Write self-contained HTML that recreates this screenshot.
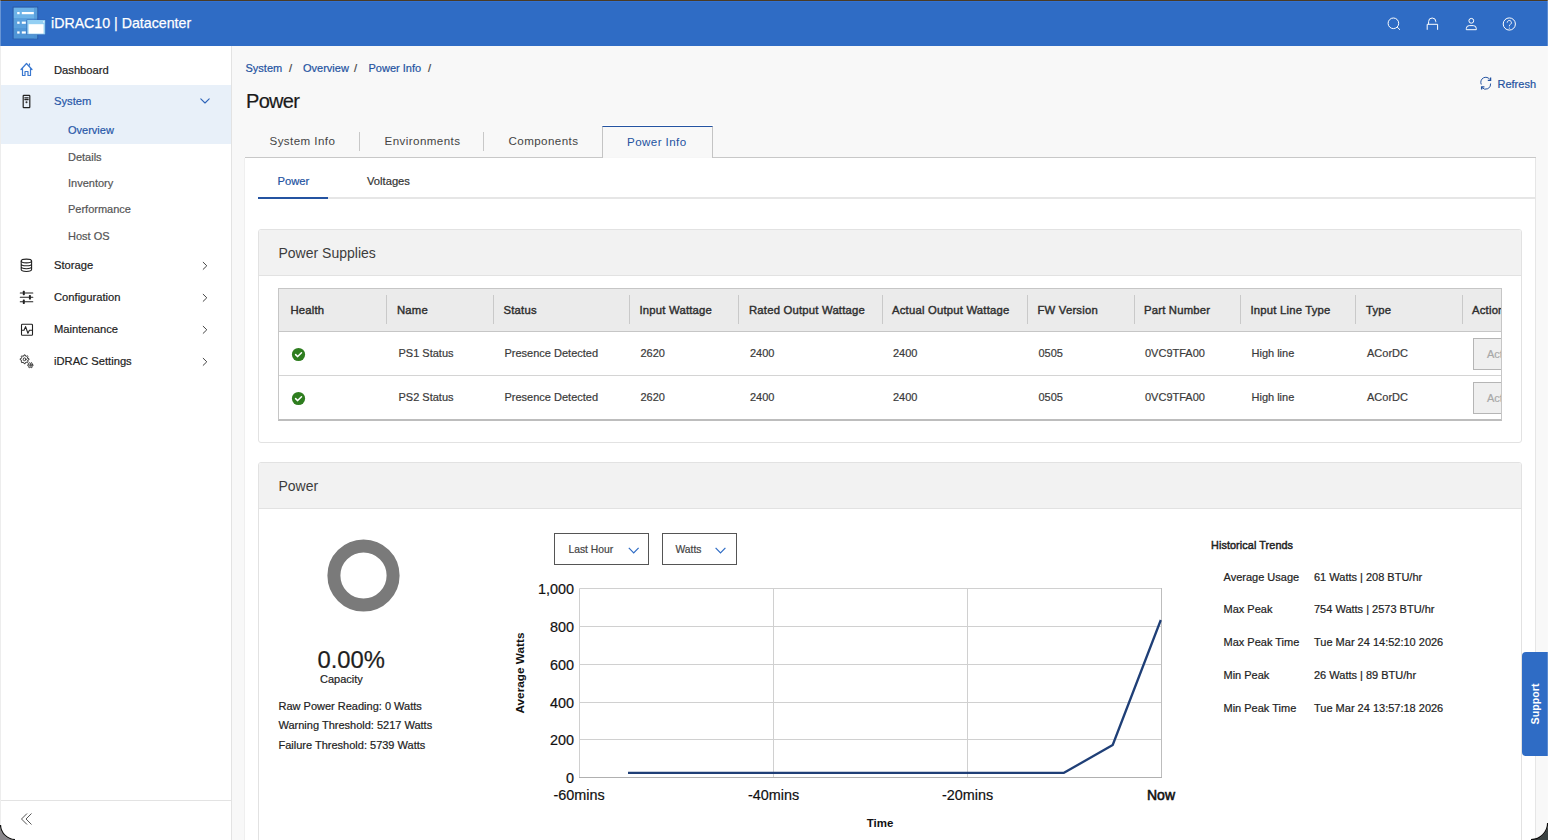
<!DOCTYPE html><html><head><meta charset="utf-8"><style>
html,body{margin:0;padding:0;width:1548px;height:840px;overflow:hidden;background:#f8f8f8}
body{position:relative;font-family:"Liberation Sans", sans-serif}
.t{position:absolute;line-height:1;white-space:nowrap;-webkit-text-stroke:0.2px currentColor}
.r{position:absolute;box-sizing:border-box}
svg.r{overflow:visible}
</style></head><body>
<div class="r" style="left:0px;top:0px;width:1548px;height:840px;background:#f8f8f8"></div>
<div class="r" style="left:0px;top:46px;width:231px;height:794px;background:#fff"></div>
<div class="r" style="left:231px;top:46px;width:1px;height:794px;background:#e3e3e3"></div>
<div class="r" style="left:0px;top:46px;width:1px;height:794px;background:#e6e6e6"></div>
<div class="r" style="left:0px;top:0px;width:1548px;height:46px;background:#2f6cc5"></div>
<div class="r" style="left:0px;top:0px;width:1548px;height:1px;background:#4a3b25"></div>
<div class="r" style="left:0px;top:1px;width:1548px;height:1px;background:#3371d2"></div>
<svg class="r" style="left:12px;top:6px" width="36" height="34" viewBox="0 0 36 34">
<rect x="0.6" y="0.6" width="25.6" height="32.6" fill="#2858a6"/>
<rect x="1.6" y="1.6" width="23.6" height="10.4" fill="#6db3e8"/>
<rect x="1.6" y="12" width="23.6" height="10" fill="#5aa0dd"/>
<rect x="1.6" y="22" width="23.6" height="10.6" fill="#4f95d6"/>
<rect x="22" y="1.6" width="3.2" height="31" fill="#4a8fd2" opacity="0.55"/>
<rect x="5.2" y="6" width="2.4" height="2.2" fill="#fff"/>
<rect x="9.8" y="6" width="12" height="2.2" fill="#fff"/>
<rect x="5.2" y="15.6" width="2.4" height="2.2" fill="#fff"/>
<rect x="9.8" y="15.6" width="4" height="2.2" fill="#fff"/>
<rect x="5.2" y="25.4" width="2.4" height="2.2" fill="#fff"/>
<rect x="9.8" y="25.4" width="4" height="2.2" fill="#fff"/>
<rect x="14.6" y="13.6" width="19" height="15.2" fill="#2d62b3"/>
<rect x="15.2" y="14" width="18" height="14.4" fill="#93cff3"/>
<rect x="16.6" y="18.2" width="15" height="9.4" fill="#fff"/>
<rect x="31" y="15.2" width="1.4" height="1.4" fill="#fff" opacity="0.7"/>
</svg>
<div class="t" style="left:51px;top:15.98px;font-size:14.2px;color:#fff;font-weight:500;-webkit-text-stroke:0.25px #fff;">iDRAC10 | Datacenter</div>
<svg class="r" style="left:1384px;top:14px" width="140" height="20" viewBox="0 0 140 20" fill="none" stroke="#fff" stroke-width="1">
<circle cx="9.4" cy="9.3" r="5.3"/><path d="M13.1 13 L16 15.8"/>
<path d="M44.6 10.3 V7.6 A3.6 3.6 0 0 1 51.8 7.6 V8.2"/><path d="M43.2 15.8 V10.3 H53.6 V15.8"/>
<circle cx="87.3" cy="6.8" r="2.4"/><path d="M82.3 15.7 V14.6 A3 3 0 0 1 85.3 11.6 H89.3 A3 3 0 0 1 92.3 14.6 V15.7 Z"/>
<circle cx="125.3" cy="10" r="6.1"/><path d="M123.2 8.6 A2.1 2.1 0 1 1 126.4 10.4 C125.6 10.9 125.3 11.3 125.3 12.3"/><circle cx="125.3" cy="14.1" r="0.55" fill="#fff" stroke="none"/>
</svg>
<div class="r" style="left:1px;top:85px;width:230px;height:59px;background:#e8f0f9"></div>
<svg class="r" style="left:0;top:46px" width="231" height="360" viewBox="0 46 231 360" fill="none" stroke-linejoin="round" stroke-linecap="round">
<g stroke="#3a78d0" stroke-width="1.2"><path d="M21 69.5 L26.5 63.5 L32 69.5 M22.5 68 V75.5 H25 V71.5 H28 V75.5 H30.5 V68 M29.5 65 V63.8"/></g>
<g stroke="#222" stroke-width="1.2"><rect x="23.2" y="95.3" width="6.6" height="12.4" rx="0.6"/><path d="M24.8 97.8 H28.2 M24.8 99.6 H28.2"/><circle cx="26.5" cy="102.3" r="0.4" fill="#222"/></g>
<g stroke="#222" stroke-width="1.1"><ellipse cx="26.4" cy="261" rx="5.2" ry="1.9"/><path d="M21.2 261 V269.6 A5.2 1.9 0 0 0 31.6 269.6 V261 M21.2 263.9 A5.2 1.9 0 0 0 31.6 263.9 M21.2 266.8 A5.2 1.9 0 0 0 31.6 266.8"/></g>
<g stroke="#222" stroke-width="1.1"><path d="M20.3 293 H32.8 M20.3 297.3 H32.8 M20.3 301.7 H32.8"/></g>
<g fill="#222"><rect x="22.8" y="290.8" width="2" height="4.4" rx="0.6"/><rect x="28.9" y="295.1" width="2" height="4.4" rx="0.6"/><rect x="22.8" y="299.5" width="2" height="4.4" rx="0.6"/></g>
<g stroke="#222" stroke-width="1.1"><rect x="21.5" y="324.3" width="11" height="11" rx="0.9"/><path d="M22.3 330.2 H24 L25.6 326.6 L27.9 333.2 L29.4 330.2 H31.8"/></g>
<g stroke="#222" stroke-width="0.9"><path d="M27.78 358.40 L28.96 358.70 L28.96 359.90 L27.78 360.20 L27.48 360.91 L28.11 361.96 L27.26 362.81 L26.21 362.18 L25.50 362.48 L25.20 363.66 L24.00 363.66 L23.70 362.48 L22.99 362.18 L21.94 362.81 L21.09 361.96 L21.72 360.91 L21.42 360.20 L20.24 359.90 L20.24 358.70 L21.42 358.40 L21.72 357.69 L21.09 356.64 L21.94 355.79 L22.99 356.42 L23.70 356.12 L24.00 354.94 L25.20 354.94 L25.50 356.12 L26.21 356.42 L27.26 355.79 L28.11 356.64 L27.48 357.69 Z"/><circle cx="24.6" cy="359.3" r="1.4"/>
<path d="M32.17 364.52 L33.05 364.71 L33.05 365.69 L32.17 365.88 L31.88 366.40 L32.15 367.25 L31.30 367.75 L30.70 367.08 L30.10 367.08 L29.50 367.75 L28.65 367.25 L28.92 366.40 L28.63 365.88 L27.75 365.69 L27.75 364.71 L28.63 364.52 L28.92 364.00 L28.65 363.15 L29.50 362.65 L30.10 363.32 L30.70 363.32 L31.30 362.65 L32.15 363.15 L31.88 364.00 Z"/><circle cx="30.4" cy="365.2" r="0.8"/></g>
<g stroke="#2d63b8" stroke-width="1.1"><path d="M200.8 98.8 L205 103 L209.2 98.8"/></g>
<g stroke="#444" stroke-width="1"><path d="M203.2 262.3 L206.8 265.8 L203.2 269.3 M203.2 294.3 L206.8 297.8 L203.2 301.3 M203.2 326.3 L206.8 329.8 L203.2 333.3 M203.2 358.3 L206.8 361.8 L203.2 365.3"/></g>
</svg>
<div class="t" style="left:54px;top:64.52px;font-size:11.2px;color:#222;font-weight:normal;">Dashboard</div>
<div class="t" style="left:54px;top:95.52px;font-size:11.2px;color:#2757a8;font-weight:normal;">System</div>
<div class="t" style="left:68px;top:124.69px;font-size:11px;color:#2757a8;font-weight:normal;">Overview</div>
<div class="t" style="left:68px;top:151.69px;font-size:11px;color:#555;font-weight:normal;">Details</div>
<div class="t" style="left:68px;top:177.69px;font-size:11px;color:#555;font-weight:normal;">Inventory</div>
<div class="t" style="left:68px;top:203.69px;font-size:11px;color:#555;font-weight:normal;">Performance</div>
<div class="t" style="left:68px;top:230.69px;font-size:11px;color:#555;font-weight:normal;">Host OS</div>
<div class="t" style="left:54px;top:259.52px;font-size:11.2px;color:#222;font-weight:normal;">Storage</div>
<div class="t" style="left:54px;top:291.52px;font-size:11.2px;color:#222;font-weight:normal;">Configuration</div>
<div class="t" style="left:54px;top:323.52px;font-size:11.2px;color:#222;font-weight:normal;">Maintenance</div>
<div class="t" style="left:54px;top:355.52px;font-size:11.2px;color:#222;font-weight:normal;">iDRAC Settings</div>
<div class="r" style="left:1px;top:800px;width:230px;height:1px;background:#e3e3e3"></div>
<svg class="r" style="left:18px;top:810px" width="18" height="18" viewBox="0 0 18 18" fill="none" stroke="#555" stroke-width="1">
<path d="M9 3.5 L3.5 9 L9 14.5 M13.5 3.5 L8 9 L13.5 14.5"/></svg>
<div class="t" style="left:245.5px;top:62.69px;font-size:11px;color:#2453a1;font-weight:normal;">System</div>
<div class="t" style="left:289px;top:62.69px;font-size:11px;color:#444;font-weight:normal;">/</div>
<div class="t" style="left:303px;top:62.69px;font-size:11px;color:#2453a1;font-weight:normal;">Overview</div>
<div class="t" style="left:354px;top:62.69px;font-size:11px;color:#444;font-weight:normal;">/</div>
<div class="t" style="left:368.5px;top:62.69px;font-size:11px;color:#2453a1;font-weight:normal;">Power Info</div>
<div class="t" style="left:428px;top:62.69px;font-size:11px;color:#444;font-weight:normal;">/</div>
<div class="t" style="left:246px;top:91.07px;font-size:20px;color:#1a1a1a;font-weight:normal;letter-spacing:-0.7px;">Power</div>
<svg class="r" style="left:1478px;top:75px" width="16" height="17" viewBox="0 0 16 17" fill="none" stroke="#2453a1" stroke-width="1">
<path d="M3.3 9.5 A5 5 0 0 1 12 4.6"/><path d="M12.6 8.5 A5 5 0 0 1 4 12.6"/><path d="M12.6 2.5 V5.3 H9.8" stroke-width="1.3"/><path d="M3.6 14.6 V11.8 H6.4" stroke-width="1.3"/></svg>
<div class="t" style="left:1497.5px;top:78.69px;font-size:11px;color:#2453a1;font-weight:normal;">Refresh</div>
<div class="r" style="left:245px;top:157px;width:1291px;height:1px;background:#c8c8c8"></div>
<div class="r" style="left:359px;top:132px;width:1px;height:19px;background:#c8c8c8"></div>
<div class="r" style="left:483px;top:132px;width:1px;height:19px;background:#c8c8c8"></div>
<div class="t" style="left:269.5px;top:135.18px;font-size:11.6px;color:#444;font-weight:normal;letter-spacing:0.42px;-webkit-text-stroke:0;">System Info</div>
<div class="t" style="left:384.5px;top:135.18px;font-size:11.6px;color:#444;font-weight:normal;letter-spacing:0.42px;-webkit-text-stroke:0;">Environments</div>
<div class="t" style="left:508.5px;top:135.18px;font-size:11.6px;color:#444;font-weight:normal;letter-spacing:0.42px;-webkit-text-stroke:0;">Components</div>
<div class="r" style="left:602px;top:125px;width:112px;height:1px;background:#fff"></div>
<div class="r" style="left:602px;top:126px;width:111px;height:32px;background:#f8f8f8;border:1px solid #c4c4c4;border-top:1px solid #2453a1;border-bottom:none"></div>
<div class="t" style="left:627px;top:136.18px;font-size:11.6px;color:#2453a1;font-weight:normal;letter-spacing:0.42px;-webkit-text-stroke:0;">Power Info</div>
<div class="r" style="left:244px;top:158px;width:1292px;height:700px;background:#fff;border-left:1px solid #efefef;border-right:1px solid #e6e6e6"></div>
<div class="r" style="left:603px;top:157px;width:109px;height:1px;background:#f6f6f6"></div>
<div class="t" style="left:277.5px;top:175.52px;font-size:11.2px;color:#2453a1;font-weight:normal;">Power</div>
<div class="t" style="left:367px;top:175.52px;font-size:11.2px;color:#333;font-weight:normal;">Voltages</div>
<div class="r" style="left:258px;top:197px;width:1277px;height:2px;background:#e6e6e6"></div>
<div class="r" style="left:258px;top:197px;width:70px;height:2px;background:#2453a1"></div>
<div class="r" style="left:258px;top:229px;width:1264px;height:214px;background:#fff;border:1px solid #e2e2e2;border-radius:3px"></div>
<div class="r" style="left:259px;top:230px;width:1262px;height:46px;background:#f2f2f2;border-bottom:1px solid #e2e2e2;border-radius:2px 2px 0 0"></div>
<div class="t" style="left:278.5px;top:246.15px;font-size:14px;color:#3c3c3c;font-weight:normal;-webkit-text-stroke:0;">Power Supplies</div>
<div class="r" style="left:278px;top:288px;width:1224px;height:133px;background:#fff;border:1px solid #c6c6c6;border-bottom:2px solid #bdbdbd"></div>
<div class="r" style="left:279px;top:289px;width:1222px;height:43px;background:#ebebeb;border-bottom:1px solid #c6c6c6"></div>
<div class="r" style="left:279px;top:375px;width:1222px;height:1px;background:#d4d4d4"></div>
<div class="r" style="left:386px;top:295px;width:1px;height:29px;background:#c9c9c9"></div>
<div class="r" style="left:493px;top:295px;width:1px;height:29px;background:#c9c9c9"></div>
<div class="r" style="left:629px;top:295px;width:1px;height:29px;background:#c9c9c9"></div>
<div class="r" style="left:738px;top:295px;width:1px;height:29px;background:#c9c9c9"></div>
<div class="r" style="left:882px;top:295px;width:1px;height:29px;background:#c9c9c9"></div>
<div class="r" style="left:1027px;top:295px;width:1px;height:29px;background:#c9c9c9"></div>
<div class="r" style="left:1134px;top:295px;width:1px;height:29px;background:#c9c9c9"></div>
<div class="r" style="left:1240px;top:295px;width:1px;height:29px;background:#c9c9c9"></div>
<div class="r" style="left:1355px;top:295px;width:1px;height:29px;background:#c9c9c9"></div>
<div class="r" style="left:1462px;top:295px;width:1px;height:29px;background:#c9c9c9"></div>
<div class="r" style="left:279px;top:289px;width:1222px;height:42px;overflow:hidden">
<div class="t" style="left:11.5px;top:15.52px;font-size:11.3px;color:#2e2e2e;font-weight:normal;-webkit-text-stroke:0.4px #2e2e2e;letter-spacing:0.2px">Health</div>
<div class="t" style="left:118px;top:15.52px;font-size:11.3px;color:#2e2e2e;font-weight:normal;-webkit-text-stroke:0.4px #2e2e2e;letter-spacing:0.2px">Name</div>
<div class="t" style="left:224.5px;top:15.52px;font-size:11.3px;color:#2e2e2e;font-weight:normal;-webkit-text-stroke:0.4px #2e2e2e;letter-spacing:0.2px">Status</div>
<div class="t" style="left:360.5px;top:15.52px;font-size:11.3px;color:#2e2e2e;font-weight:normal;-webkit-text-stroke:0.4px #2e2e2e;letter-spacing:0.2px">Input Wattage</div>
<div class="t" style="left:470px;top:15.52px;font-size:11.3px;color:#2e2e2e;font-weight:normal;-webkit-text-stroke:0.4px #2e2e2e;letter-spacing:0.2px">Rated Output Wattage</div>
<div class="t" style="left:613px;top:15.52px;font-size:11.3px;color:#2e2e2e;font-weight:normal;-webkit-text-stroke:0.4px #2e2e2e;letter-spacing:0.2px">Actual Output Wattage</div>
<div class="t" style="left:758.5px;top:15.52px;font-size:11.3px;color:#2e2e2e;font-weight:normal;-webkit-text-stroke:0.4px #2e2e2e;letter-spacing:0.2px">FW Version</div>
<div class="t" style="left:865px;top:15.52px;font-size:11.3px;color:#2e2e2e;font-weight:normal;-webkit-text-stroke:0.4px #2e2e2e;letter-spacing:0.2px">Part Number</div>
<div class="t" style="left:971.5px;top:15.52px;font-size:11.3px;color:#2e2e2e;font-weight:normal;-webkit-text-stroke:0.4px #2e2e2e;letter-spacing:0.2px">Input Line Type</div>
<div class="t" style="left:1087px;top:15.52px;font-size:11.3px;color:#2e2e2e;font-weight:normal;-webkit-text-stroke:0.4px #2e2e2e;letter-spacing:0.2px">Type</div>
<div class="t" style="left:1193px;top:15.52px;font-size:11.3px;color:#2e2e2e;font-weight:normal;-webkit-text-stroke:0.4px #2e2e2e;letter-spacing:0.2px">Action</div>
</div>
<svg class="r" style="left:291px;top:347.0px" width="15" height="15" viewBox="0 0 15 15"><circle cx="7.5" cy="7.5" r="6.6" fill="#2e7d1f"/><path d="M4.6 7.6 L6.7 9.6 L10.5 5.7" fill="none" stroke="#fff" stroke-width="1.5" stroke-linecap="round" stroke-linejoin="round"/></svg>
<div class="t" style="left:398.5px;top:347.69px;font-size:11px;color:#3a3a3a;font-weight:normal;">PS1 Status</div>
<div class="t" style="left:504.5px;top:347.69px;font-size:11px;color:#3a3a3a;font-weight:normal;">Presence Detected</div>
<div class="t" style="left:640.5px;top:347.69px;font-size:11px;color:#3a3a3a;font-weight:normal;">2620</div>
<div class="t" style="left:750px;top:347.69px;font-size:11px;color:#3a3a3a;font-weight:normal;">2400</div>
<div class="t" style="left:893px;top:347.69px;font-size:11px;color:#3a3a3a;font-weight:normal;">2400</div>
<div class="t" style="left:1038.5px;top:347.69px;font-size:11px;color:#3a3a3a;font-weight:normal;">0505</div>
<div class="t" style="left:1145px;top:347.69px;font-size:11px;color:#3a3a3a;font-weight:normal;">0VC9TFA00</div>
<div class="t" style="left:1251.5px;top:347.69px;font-size:11px;color:#3a3a3a;font-weight:normal;">High line</div>
<div class="t" style="left:1367px;top:347.69px;font-size:11px;color:#3a3a3a;font-weight:normal;">ACorDC</div>
<div class="r" style="left:1473px;top:338px;width:28px;height:32px;overflow:hidden"><div style="position:absolute;left:0;top:0;width:80px;height:32px;box-sizing:border-box;background:#efefef;border:1px solid #b5b5b5;"></div><div class="t" style="left:14px;top:11.1885px;font-size:11px;color:#a8a8a8">Action</div></div>
<svg class="r" style="left:291px;top:391.0px" width="15" height="15" viewBox="0 0 15 15"><circle cx="7.5" cy="7.5" r="6.6" fill="#2e7d1f"/><path d="M4.6 7.6 L6.7 9.6 L10.5 5.7" fill="none" stroke="#fff" stroke-width="1.5" stroke-linecap="round" stroke-linejoin="round"/></svg>
<div class="t" style="left:398.5px;top:391.69px;font-size:11px;color:#3a3a3a;font-weight:normal;">PS2 Status</div>
<div class="t" style="left:504.5px;top:391.69px;font-size:11px;color:#3a3a3a;font-weight:normal;">Presence Detected</div>
<div class="t" style="left:640.5px;top:391.69px;font-size:11px;color:#3a3a3a;font-weight:normal;">2620</div>
<div class="t" style="left:750px;top:391.69px;font-size:11px;color:#3a3a3a;font-weight:normal;">2400</div>
<div class="t" style="left:893px;top:391.69px;font-size:11px;color:#3a3a3a;font-weight:normal;">2400</div>
<div class="t" style="left:1038.5px;top:391.69px;font-size:11px;color:#3a3a3a;font-weight:normal;">0505</div>
<div class="t" style="left:1145px;top:391.69px;font-size:11px;color:#3a3a3a;font-weight:normal;">0VC9TFA00</div>
<div class="t" style="left:1251.5px;top:391.69px;font-size:11px;color:#3a3a3a;font-weight:normal;">High line</div>
<div class="t" style="left:1367px;top:391.69px;font-size:11px;color:#3a3a3a;font-weight:normal;">ACorDC</div>
<div class="r" style="left:1473px;top:382px;width:28px;height:32px;overflow:hidden"><div style="position:absolute;left:0;top:0;width:80px;height:32px;box-sizing:border-box;background:#efefef;border:1px solid #b5b5b5;"></div><div class="t" style="left:14px;top:11.1885px;font-size:11px;color:#a8a8a8">Action</div></div>
<div class="r" style="left:258px;top:462px;width:1264px;height:400px;background:#fff;border:1px solid #e2e2e2;border-radius:3px"></div>
<div class="r" style="left:259px;top:463px;width:1262px;height:46px;background:#f2f2f2;border-bottom:1px solid #e2e2e2;border-radius:2px 2px 0 0"></div>
<div class="t" style="left:278.5px;top:479.15px;font-size:14px;color:#3c3c3c;font-weight:normal;-webkit-text-stroke:0;">Power</div>
<svg class="r" style="left:327px;top:539px" width="73" height="73" viewBox="0 0 73 73"><circle cx="36.5" cy="36.5" r="29.6" fill="none" stroke="#7a7a7a" stroke-width="13"/></svg>
<div class="t" style="left:317.5px;top:647.85px;font-size:23.8px;color:#1e1e1e;font-weight:normal;">0.00%</div>
<div class="t" style="left:320px;top:673.69px;font-size:11px;color:#222;font-weight:normal;">Capacity</div>
<div class="t" style="left:278.5px;top:700.69px;font-size:11px;color:#222;font-weight:normal;">Raw Power Reading: 0 Watts</div>
<div class="t" style="left:278.5px;top:719.69px;font-size:11px;color:#222;font-weight:normal;">Warning Threshold: 5217 Watts</div>
<div class="t" style="left:278.5px;top:739.69px;font-size:11px;color:#222;font-weight:normal;">Failure Threshold: 5739 Watts</div>
<div class="r" style="left:554px;top:533px;width:95px;height:32px;background:#fff;border:1px solid #555"></div>
<div class="r" style="left:662px;top:533px;width:75px;height:32px;background:#fff;border:1px solid #555"></div>
<div class="t" style="left:568.5px;top:544.88px;font-size:10.3px;color:#444;font-weight:normal;">Last Hour</div>
<div class="t" style="left:675.5px;top:544.88px;font-size:10.3px;color:#444;font-weight:normal;">Watts</div>
<svg class="r" style="left:0;top:0" width="1548" height="840" viewBox="0 0 1548 840" fill="none">
<path d="M628.8 547.8 L633.7 552.8 L638.6 547.8 M715.6 547.8 L720.5 552.8 L725.4 547.8" stroke="#2f6cc5" stroke-width="1.2"/>
</svg>
<svg class="r" style="left:0;top:0" width="1548" height="840" viewBox="0 0 1548 840" fill="none">
<path d="M579 626.5 H1161" stroke="#d0d0d0" stroke-width="1"/>
<path d="M579 664.5 H1161" stroke="#d0d0d0" stroke-width="1"/>
<path d="M579 702.5 H1161" stroke="#d0d0d0" stroke-width="1"/>
<path d="M579 739.5 H1161" stroke="#d0d0d0" stroke-width="1"/>
<path d="M773.5 588.5 V777" stroke="#d0d0d0" stroke-width="1"/>
<path d="M967.5 588.5 V777" stroke="#d0d0d0" stroke-width="1"/>
<path d="M579.5 777 V588.5 H1161" stroke="#d0d0d0" stroke-width="1"/>
<path d="M1161.5 588 V777.5" stroke="#bdbdbd" stroke-width="1"/>
<path d="M579 777.5 H1162" stroke="#b0b0b0" stroke-width="1"/>
<polyline points="628,772.8 1064,772.8 1112.7,745 1160.8,620" stroke="#1f3f77" stroke-width="2.3" stroke-linejoin="round"/>
</svg>
<div class="t" style="right:974px;top:582.11px;font-size:14.4px;color:#111;font-weight:normal;">1,000</div>
<div class="t" style="right:974px;top:620.11px;font-size:14.4px;color:#111;font-weight:normal;">800</div>
<div class="t" style="right:974px;top:658.11px;font-size:14.4px;color:#111;font-weight:normal;">600</div>
<div class="t" style="right:974px;top:696.11px;font-size:14.4px;color:#111;font-weight:normal;">400</div>
<div class="t" style="right:974px;top:733.11px;font-size:14.4px;color:#111;font-weight:normal;">200</div>
<div class="t" style="right:974px;top:771.11px;font-size:14.4px;color:#111;font-weight:normal;">0</div>
<div class="t" style="left:379px;width:400px;text-align:center;top:787.81px;font-size:14.4px;color:#111;font-weight:normal;">-60mins</div>
<div class="t" style="left:573.5px;width:400px;text-align:center;top:787.81px;font-size:14.4px;color:#111;font-weight:normal;">-40mins</div>
<div class="t" style="left:767.5px;width:400px;text-align:center;top:787.81px;font-size:14.4px;color:#111;font-weight:normal;">-20mins</div>
<div class="t" style="left:961px;width:400px;text-align:center;top:788.15px;font-size:14px;color:#111;font-weight:normal;-webkit-text-stroke:0.55px #111;">Now</div>
<div class="t" style="left:680px;width:400px;text-align:center;top:818.27px;font-size:11.5px;color:#111;font-weight:bold;-webkit-text-stroke:0;">Time</div>
<div class="t" style="left:420px;top:666.8px;width:200px;height:12px;text-align:center;font-size:11.8px;font-weight:bold;color:#111;transform:rotate(-90deg);line-height:12px;-webkit-text-stroke:0">Average Watts</div>
<div class="t" style="left:1211px;top:539.86px;font-size:10.8px;color:#222;font-weight:normal;-webkit-text-stroke:0.45px #222;letter-spacing:0.1px;">Historical Trends</div>
<div class="t" style="left:1223.5px;top:571.59px;font-size:11px;color:#222;font-weight:normal;">Average Usage</div>
<div class="t" style="left:1314px;top:571.59px;font-size:11px;color:#222;font-weight:normal;">61 Watts | 208 BTU/hr</div>
<div class="t" style="left:1223.5px;top:604.34px;font-size:11px;color:#222;font-weight:normal;">Max Peak</div>
<div class="t" style="left:1314px;top:604.34px;font-size:11px;color:#222;font-weight:normal;">754 Watts | 2573 BTU/hr</div>
<div class="t" style="left:1223.5px;top:637.09px;font-size:11px;color:#222;font-weight:normal;">Max Peak Time</div>
<div class="t" style="left:1314px;top:637.09px;font-size:11px;color:#222;font-weight:normal;">Tue Mar 24 14:52:10 2026</div>
<div class="t" style="left:1223.5px;top:669.84px;font-size:11px;color:#222;font-weight:normal;">Min Peak</div>
<div class="t" style="left:1314px;top:669.84px;font-size:11px;color:#222;font-weight:normal;">26 Watts | 89 BTU/hr</div>
<div class="t" style="left:1223.5px;top:702.59px;font-size:11px;color:#222;font-weight:normal;">Min Peak Time</div>
<div class="t" style="left:1314px;top:702.59px;font-size:11px;color:#222;font-weight:normal;">Tue Mar 24 13:57:18 2026</div>
<div class="r" style="left:1522px;top:652px;width:30px;height:104px;background:#2f6cc5;border-radius:4px 0 0 4px"></div>
<div class="t" style="left:1485px;top:698.3px;width:100px;height:12px;text-align:center;font-size:10.7px;font-weight:bold;color:#fff;transform:rotate(-90deg);line-height:12px;-webkit-text-stroke:0">Support</div>
<div class="r" style="left:0px;top:0px;width:1px;height:840px;background:rgba(255,255,255,0.28)"></div>
<div class="r" style="left:1547px;top:0px;width:1px;height:840px;background:rgba(255,255,255,0.22)"></div>
<svg class="r" style="left:0;top:822px" width="20" height="18" viewBox="0 822 20 18">
<path d="M0 822 V825 A15 15 0 0 0 15 840 H0 Z" fill="#8a878c"/>
<path d="M0.5 825 A15 15 0 0 0 15 839.5" fill="none" stroke="#111" stroke-width="1.2"/>
</svg>
<svg class="r" style="left:1524px;top:816px" width="24" height="24" viewBox="1524 816 24 24">
<path d="M1548 816 V823 A16.5 16.5 0 0 1 1531 840 H1548 Z" fill="#3a4141"/>
<path d="M1547.6 823 A16.5 16.5 0 0 1 1531 839.6" fill="none" stroke="#0d0d0d" stroke-width="1.2"/>
</svg>
</body></html>
